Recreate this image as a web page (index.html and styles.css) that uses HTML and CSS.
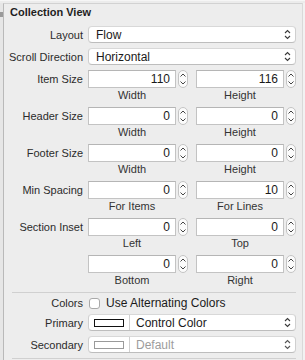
FILE: index.html
```html
<!DOCTYPE html>
<html lang="en">
<head>
    <meta charset="UTF-8">
    <meta name="viewport" content="width=device-width, initial-scale=1.0">
    <title>Collection View Inspector</title>
    <link rel="stylesheet" href="styles.css">
</head>
<body>
<div class="inspector">
    <div class="gutter"><span class="grip"></span></div>
    <div class="panel">
        <div class="title">Collection View</div>

        <div class="row">
            <label>Layout</label>
            <div class="popup"><span>Flow</span>
                <svg class="chev" width="7" height="11" viewBox="0 0 7 11"><path d="M1 4 L3.5 1.5 L6 4 M1 7 L3.5 9.5 L6 7"/></svg>
            </div>
        </div>
        <div class="row">
            <label>Scroll Direction</label>
            <div class="popup"><span>Horizontal</span>
                <svg class="chev" width="7" height="11" viewBox="0 0 7 11"><path d="M1 4 L3.5 1.5 L6 4 M1 7 L3.5 9.5 L6 7"/></svg>
            </div>
        </div>

        <div class="row size">
            <label>Item Size</label>
            <div class="pair">
                <div class="num"><div class="field">110</div><div class="stepper"></div><span class="cap">Width</span></div>
                <div class="num"><div class="field">116</div><div class="stepper"></div><span class="cap">Height</span></div>
            </div>
        </div>
        <div class="row size">
            <label>Header Size</label>
            <div class="pair">
                <div class="num"><div class="field">0</div><div class="stepper"></div><span class="cap">Width</span></div>
                <div class="num"><div class="field">0</div><div class="stepper"></div><span class="cap">Height</span></div>
            </div>
        </div>
        <div class="row size">
            <label>Footer Size</label>
            <div class="pair">
                <div class="num"><div class="field">0</div><div class="stepper"></div><span class="cap">Width</span></div>
                <div class="num"><div class="field">0</div><div class="stepper"></div><span class="cap">Height</span></div>
            </div>
        </div>
        <div class="row size">
            <label>Min Spacing</label>
            <div class="pair">
                <div class="num"><div class="field">0</div><div class="stepper"></div><span class="cap">For Items</span></div>
                <div class="num"><div class="field">10</div><div class="stepper"></div><span class="cap">For Lines</span></div>
            </div>
        </div>
        <div class="row size">
            <label>Section Inset</label>
            <div class="pair">
                <div class="num"><div class="field">0</div><div class="stepper"></div><span class="cap">Left</span></div>
                <div class="num"><div class="field">0</div><div class="stepper"></div><span class="cap">Top</span></div>
            </div>
        </div>
        <div class="row size">
            <label></label>
            <div class="pair">
                <div class="num"><div class="field">0</div><div class="stepper"></div><span class="cap">Bottom</span></div>
                <div class="num"><div class="field">0</div><div class="stepper"></div><span class="cap">Right</span></div>
            </div>
        </div>

        <div class="sep"></div>

        <div class="row check-row">
            <label>Colors</label>
            <div class="check"><span class="box"></span>Use Alternating Colors</div>
        </div>
        <div class="row">
            <label>Primary</label>
            <div class="popup color"><span class="well"><span class="swatch"></span></span><span>Control Color</span>
                <svg class="chev" width="7" height="11" viewBox="0 0 7 11"><path d="M1 4 L3.5 1.5 L6 4 M1 7 L3.5 9.5 L6 7"/></svg>
            </div>
        </div>
        <div class="row">
            <label>Secondary</label>
            <div class="popup color off"><span class="well"><span class="swatch"></span></span><span>Default</span>
                <svg class="chev" width="7" height="11" viewBox="0 0 7 11"><path d="M1 4 L3.5 1.5 L6 4 M1 7 L3.5 9.5 L6 7"/></svg>
            </div>
        </div>

        <div class="sep last"></div>
    </div>
    <div class="edge"></div>
</div>
</body>
</html>
```

FILE: styles.css
```css
body {
    margin: 0;
    background-color: #ececec;
    font-family: "Liberation Sans", Arial, sans-serif;
    font-size: 11px;
    color: #2b2b2b;
}
.inspector {
    display: flex;
    height: 360px;
    padding-top: 2px;
    box-sizing: border-box;
    border-top: 1px solid #f6f6f6;
}
.gutter {
    width: 3px;
    background-color: #e6e6e6;
    position: relative;
}
.grip {
    position: absolute;
    left: 0;
    top: 9px;
    width: 3px;
    height: 5px;
    background-color: #9a9a9a;
}
.panel {
    width: 296px;
    border-left: 1px solid #b9b9b9;
    border-top: 1px solid #d2d2d2;
    padding-right: 2px;
    background-color: #ededed;
}
.edge {
    flex: 1;
    border-left: 1px solid #d9d9d9;
    background-color: #f2f2f2;
}
.title {
    height: 22px;
    padding-left: 6px;
    line-height: 16px;
    font-weight: bold;
    color: #1e1e1e;
}
.row {
    display: grid;
    grid-template-columns: 79px 208px;
    column-gap: 5px;
    align-items: center;
    margin-bottom: 5px;
}
.row label {
    text-align: right;
    white-space: nowrap;
}
.size {
    align-items: start;
    margin-bottom: 5px;
}
.size label {
    line-height: 18px;
}
.popup {
    height: 17px;
    background-color: #fff;
    border: 1px solid #cfcfcf;
    border-top-color: #d8d8d8;
    border-bottom-color: #bdbdbd;
    border-radius: 4px;
    box-sizing: border-box;
    display: flex;
    align-items: center;
    padding-left: 7px;
    padding-right: 4px;
    font-size: 12px;
    color: #1a1a1a;
}
.popup span {
    flex: 1;
}
.chev {
    fill: none;
    stroke: #3a3a3a;
    stroke-width: 1.1;
}
.pair {
    display: flex;
    gap: 8px;
}
.num {
    display: grid;
    grid-template-columns: 88px 10px;
    column-gap: 2px;
}
.field {
    height: 18px;
    box-sizing: border-box;
    background-color: #fff;
    border: 1px solid #c3c3c3;
    border-top-color: #b5b5b5;
    text-align: right;
    padding-right: 5px;
    line-height: 16px;
    font-size: 12px;
    color: #1a1a1a;
}
.stepper {
    height: 18px;
    box-sizing: border-box;
    border: 1px solid #c4c4c4;
    border-radius: 5px;
    background-color: #fbfbfb;
    background-image:
        url("data:image/svg+xml;utf8,<svg xmlns='http://www.w3.org/2000/svg' width='8' height='16' viewBox='0 0 8 16'><path d='M1.5 5.5 L4 3 L6.5 5.5 M1.5 10.5 L4 13 L6.5 10.5' fill='none' stroke='%23444' stroke-width='1'/></svg>");
    background-repeat: no-repeat;
    background-position: center;
}
.cap {
    grid-column: 1;
    text-align: center;
    line-height: 14px;
    color: #333;
}
.sep {
    height: 1px;
    background-color: #d0d0d0;
    margin: 0 4px 3px 8px;
}
.sep.last {
    margin-top: 5px;
}
.check-row {
    margin-bottom: 4px;
    line-height: 14px;
}
.check {
    display: flex;
    align-items: center;
    font-size: 12px;
    color: #1a1a1a;
}
.box {
    width: 11px;
    height: 11px;
    box-sizing: border-box;
    border: 1px solid #a9a9a9;
    border-radius: 3px;
    background-color: #fff;
    margin-left: 1px;
    margin-right: 6px;
}
.popup.color {
    padding-left: 0;
}
.well {
    flex: none !important;
    width: 40px;
    height: 100%;
    border-right: 1px solid #d0d0d0;
    display: flex;
    align-items: center;
    justify-content: center;
    margin-right: 6px;
}
.swatch {
    flex: none !important;
    width: 28px;
    height: 6px;
    border: 1px solid #111;
    background-color: #fff;
}
.off {
    color: #9c9c9c;
}
.off .swatch {
    border-color: #9a9a9a;
}
.off .chev {
    stroke: #555;
}
```
